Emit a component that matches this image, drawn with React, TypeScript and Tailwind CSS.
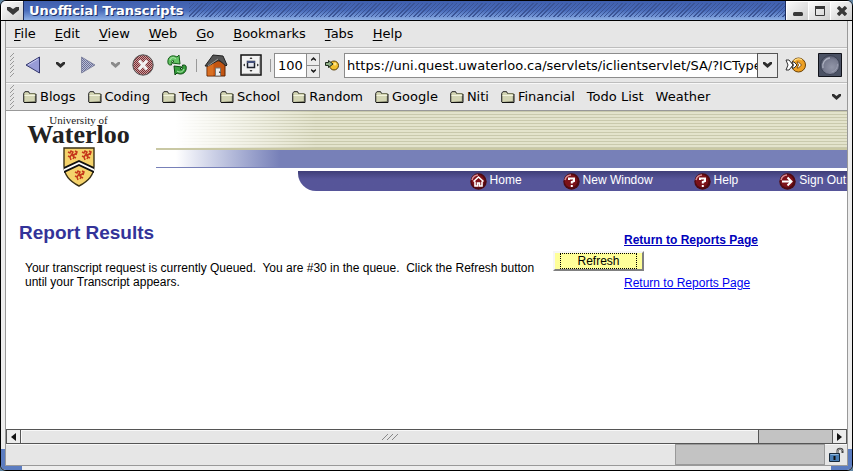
import type { ReactNode } from 'react'

const menus = ['File', 'Edit', 'View', 'Web', 'Go', 'Bookmarks', 'Tabs', 'Help']

const folders = ['Blogs', 'Coding', 'Tech', 'School', 'Random', 'Google', 'Niti', 'Financial']

const STRIPES =
  'bg-[repeating-linear-gradient(135deg,#3a5496_0px,#3a5496_1px,transparent_1px,transparent_3px)]'

function Chevron({ color = '#2e2e2e' }: { color?: string }) {
  return (
    <svg width="9" height="6" viewBox="0 0 9 6" fill={color}>
      <path d="M0 0h2l2.500 2L7 0h2v2L4.500 6 0 2z" />
    </svg>
  )
}

function Folder() {
  return (
    <svg width="14" height="12" viewBox="0 0 14 12">
      <path d="M1 11.500V2.500L2 .8h3.500l1 1.700h5.800v8z" fill="#d3d5b4" stroke="#77795f" />
      <path d="M1.500 4.500h11" stroke="#f3f4df" />
      <path d="M1 11.500h12V3" fill="none" stroke="#111" />
      <path d="M.5 11V2.500L2 .5h3.500l1 2" fill="none" stroke="#444" />
    </svg>
  )
}

function Grip() {
  return (
    <svg width="6" height="24" viewBox="0 0 6 24" stroke="#999">
      <path d="M1 4l4-4M1 8l4-4M1 12l4-4M1 16l4-4M1 20l4-4M1 24l4-4" />
    </svg>
  )
}

function BackIcon() {
  return (
    <svg width="16" height="18" viewBox="0 0 16 18">
      <path d="M1 9L14.500 1v16z" fill="#979bd6" stroke="#33376e" />
      <path d="M3 9L13 3" stroke="#c5c8ee" />
    </svg>
  )
}

function ForwardIcon() {
  return (
    <svg width="16" height="18" viewBox="0 0 16 18">
      <defs>
        <pattern id="dither" width="2" height="2" patternUnits="userSpaceOnUse">
          <path d="M0 0h1v1H0zM1 1h1v1H1z" fill="#6a6f96" />
        </pattern>
      </defs>
      <path d="M15 9L1.500 1v16z" fill="#b9bcd6" />
      <path d="M15 9L1.500 1v16z" fill="url(#dither)" stroke="#6f7291" strokeWidth=".7" />
    </svg>
  )
}

function StopIcon() {
  return (
    <svg width="22" height="22" viewBox="0 0 22 22">
      <defs>
        <pattern id="stop-dither" width="2" height="2" patternUnits="userSpaceOnUse">
          <path d="M0 0h1v1H0zM1 1h1v1H1z" fill="#7c2b30" />
        </pattern>
      </defs>
      <circle cx="11" cy="11" r="10.200" fill="#c9a3a3" />
      <circle cx="11" cy="11" r="10.200" fill="url(#stop-dither)" stroke="#555" />
      <path d="M7 6.500l8 9M15 6.500l-8 9" stroke="#f2f2f2" strokeWidth="3" />
    </svg>
  )
}

function ReloadIcon() {
  return (
    <svg width="22" height="22" viewBox="0 0 22 22" strokeLinejoin="round">
      <path
        d="M2 9C1 3 6 0 11 3l2-2 1 9-8-1 2-2C6 6 5 7 5.500 11 3.500 11 2.500 11 2 9z"
        fill="#65c465"
        stroke="#145c18"
      />
      <path
        d="M20 12c1.500 6-4 10-9 7l-2 2-1-9 8 1-2 2c2 1 3 0 2.500-4 2 0 3 0 3.500 1z"
        fill="#38a13e"
        stroke="#0b4810"
      />
      <path d="M4 6c1-3 4-3 6-1M11 17c3 2 6 1 7-2" fill="none" stroke="#b6eab2" />
    </svg>
  )
}

function HomeIcon() {
  return (
    <svg width="24" height="23" viewBox="0 0 24 23">
      <path d="M3 10v12h18V9L11 6z" fill="#c35512" stroke="#5a2505" />
      <path d="M3.500 10v11.500h6V7z" fill="#d96f22" />
      <path d="M1 12L9 1l10 1 4 9-1 1-7-6L4 12z" fill="#555" stroke="#222" />
      <path d="M4 12L14 5" stroke="#999" />
      <path d="M11.500 14h5v8h-5z" fill="#ececec" stroke="#777" />
      <path d="M15 18h1v1" stroke="#333" />
    </svg>
  )
}

function FullscreenIcon() {
  return (
    <svg width="22" height="22" viewBox="0 0 22 22">
      <path d="M1 1h20v20H1z" fill="#f2f2f2" stroke="#111" strokeWidth="1.500" />
      <path d="M2.500 19.500h17v-17" fill="none" stroke="#bbb" />
      <path d="M7.500 7.500h7v6h-7z" fill="#e4e6ee" stroke="#20242e" strokeWidth="1.500" />
      <path d="M7 8h8" stroke="#414e7a" strokeWidth="2" />
      <path d="M9.500 5L11 3l1.500 2zM9.500 16l1.500 2 1.500-2zM5 9.500L3 11l2 1.500zM17 9.500l2 1.500-2 1.500z" fill="#333" />
    </svg>
  )
}

function GoBall() {
  return (
    <svg width="14" height="12" viewBox="0 0 14 12">
      <circle cx="9" cy="6.500" r="4.500" fill="#f2bf2d" stroke="#5a3f08" />
      <circle cx="10" cy="5" r="1.500" fill="#ffe58a" />
      <path d="M.5 3.500h3v-2L8 5 3.500 8.500v-2h-3z" fill="#8fae86" stroke="#1d2b1b" />
    </svg>
  )
}

function FishIcon() {
  return (
    <svg width="22" height="16" viewBox="0 0 22 16">
      <circle cx="13.500" cy="8" r="7" fill="#eda024" stroke="#6b4206" />
      <path d="M9 4a6 6 0 0 1 8-1" stroke="#ffdc83" strokeWidth="1.500" fill="none" />
      <path d="M1 3h3l4 5-4 5H1l2-5z" fill="#fff" stroke="#333" />
      <path d="M7 5h2l3 3-3 3H7l1.500-3z" fill="#fff" stroke="#333" />
      <path d="M12 5h1.500l3 3-3 3H12l1.500-3z" fill="#fff" stroke="#7a4c0c" />
    </svg>
  )
}

function Throbber() {
  return (
    <svg width="24" height="24" viewBox="0 0 24 24">
      <defs>
        <radialGradient id="lens" cx=".6" cy=".62" r=".6">
          <stop offset="0" stopColor="#9296a8" />
          <stop offset=".7" stopColor="#787c90" />
          <stop offset="1" stopColor="#565b6e" />
        </radialGradient>
      </defs>
      <path d="M.5.5h23v23H.5z" fill="#4b5264" stroke="#11131a" />
      <circle cx="12" cy="12" r="9.500" fill="url(#lens)" stroke="#3c4254" />
      <path d="M5 15A8 8 0 0 1 12 5" fill="none" stroke="#a9adbd" strokeWidth="1.500" />
      <path d="M19.500 11a8 8 0 0 1-6 8" fill="none" stroke="#989cae" />
    </svg>
  )
}

function Padlock() {
  return (
    <svg width="15" height="15" viewBox="0 0 15 15">
      <path d="M8.500 7V4c0-3 5-3 5 0v2" fill="none" stroke="#444" strokeWidth="2" />
      <path d="M8.500 6V4c0-2.500 5-2.500 5 0" fill="none" stroke="#bbb" strokeWidth=".7" />
      <path d="M.5 6.500h10v8H.5z" fill="#4a7fb5" stroke="#16283a" />
      <path d="M1.500 7.500h8" stroke="#8fb8de" />
      <path d="M5.500 9v4" stroke="#111" strokeWidth="2" />
    </svg>
  )
}

function Lion({ x, y }: { x: number; y: number }) {
  return (
    <g transform={`translate(${x} ${y})`} fill="none" stroke="#c63a1c" strokeWidth="1.500">
      <path d="M1 2l2 1 1-2 2 1-1 2 2 1 2-2M5 4L3 7 1 6M5 5l2 2-1 2M3 7l1 3M7 7l2 1M8 1l2 1-1 3" />
    </g>
  )
}

function Shield() {
  return (
    <svg width="32" height="40" viewBox="0 0 32 40">
      <path d="M1 1h30v18c0 10-7 16-15 20C8 35 1 29 1 19z" fill="#f5d36c" stroke="#3c3216" strokeWidth="1.400" />
      <path d="M1 20L16 13l15 7v6L16 19 1 26z" fill="#111" />
      <path d="M1 22l15-7 15 7v2L16 17 1 24z" fill="#fff" />
      <Lion x={4} y={3} />
      <Lion x={18} y={3} />
      <Lion x={11} y={23} />
    </svg>
  )
}

function NavBall({ children }: { children: ReactNode }) {
  return (
    <svg width="17" height="17" viewBox="0 0 17 17">
      <circle cx="8.500" cy="8.500" r="8.200" fill="#4e0a12" />
      <circle cx="8" cy="8" r="6.500" fill="#7c1119" />
      <path d="M2 7a6.500 6.500 0 0 1 6-5" fill="none" stroke="#d98d94" strokeWidth="1.500" />
      {children}
    </svg>
  )
}

const question = (
  <path d="M6 7V5.500h5V8L8.800 9v1.500M8.800 12v2" fill="none" stroke="#fff" strokeWidth="2" />
)

const navLinks = [
  {
    label: 'Home',
    icon: (
      <path d="M3.500 8.500l5-4.500 5 4.500M5 8.500V13h2.500v-3h2v3H12V8.500" fill="none" stroke="#fff" strokeWidth="1.600" />
    ),
  },
  { label: 'New Window', icon: question },
  { label: 'Help', icon: question },
  {
    label: 'Sign Out',
    icon: <path d="M3 8.500h9M8.500 4.500l4 4-4 4" fill="none" stroke="#fff" strokeWidth="2" />,
  },
]

function TitleButton({ label, children }: { label: string; children: ReactNode }) {
  return (
    <button
      aria-label={label}
      className="flex h-[19px] w-[22px] items-center justify-center border-t border-l border-white bg-linear-to-br from-[#fafafa] to-[#cfcfcf]"
    >
      {children}
    </button>
  )
}

function TitleBar() {
  return (
    <header className="flex h-5 border-b border-black bg-linear-to-b from-[#3f5fae] via-[#4a6cba] to-[#8fb0e6]">
      <TitleButton label="Window menu">
        <svg width="12" height="8" viewBox="0 0 12 8">
          <path d="M0 0h3l3 2 3-2h3v3L6 8 0 3z" fill="#383838" />
        </svg>
      </TitleButton>
      <h1 className="border-l border-[#1c2c5c] px-[5px] text-[13px] leading-[19px] font-bold text-white [text-shadow:1px_1px_0_#1d3068]">
        Unofficial Transcripts
      </h1>
      <div className={`mt-0.5 h-[14px] flex-1 ${STRIPES}`} />
      <div className="flex border-l border-[#1c2c5c]">
        <TitleButton label="Minimize">
          <svg width="10" height="10" viewBox="0 0 10 10">
            <rect y="6" width="10" height="4" rx="1.500" fill="#383838" />
          </svg>
        </TitleButton>
        <TitleButton label="Maximize">
          <svg width="10" height="10" viewBox="0 0 10 10">
            <path d="M.5 1v8.500h9V1" fill="none" stroke="#383838" />
            <path d="M0 0h10v3H0z" fill="#383838" />
          </svg>
        </TitleButton>
        <TitleButton label="Close">
          <svg width="10" height="10" viewBox="0 0 10 10">
            <path d="M1 1l8 8M9 1L1 9" stroke="#383838" strokeWidth="3.400" />
          </svg>
        </TitleButton>
      </div>
    </header>
  )
}

function Toolbar() {
  return (
    <div className="flex h-[35px] items-center border-b border-[#bdbdbd] pr-[5px] pl-[3px] shadow-[inset_0_1px_0_#f8f8f8]">
      <Grip />
      <button aria-label="Back" className="ml-2.5">
        <BackIcon />
      </button>
      <button aria-label="Back history" className="ml-[15px]">
        <Chevron />
      </button>
      <button aria-label="Forward" className="ml-[15px]">
        <ForwardIcon />
      </button>
      <button aria-label="Forward history" className="ml-[15px]">
        <Chevron color="#8a8a8a" />
      </button>
      <button aria-label="Stop" className="ml-3">
        <StopIcon />
      </button>
      <button aria-label="Reload" className="ml-3">
        <ReloadIcon />
      </button>
      <div className="ml-2 h-[13px] w-px bg-[#999]" />
      <button aria-label="Home" className="ml-[7px]">
        <HomeIcon />
      </button>
      <button aria-label="Full screen" className="ml-3">
        <FullscreenIcon />
      </button>
      <div className="ml-2 h-[13px] w-px bg-[#999]" />
      <div className="ml-[3px] flex h-[25px] w-[46px] shrink-0 border border-[#8c8c8c] bg-white">
        <input aria-label="Zoom" defaultValue="100" className="w-[31px] pl-[3px] text-[13px] leading-[23px] outline-none" />
        <div className="flex flex-1 flex-col border-l border-[#8c8c8c] bg-[#ececec]">
          <button aria-label="Zoom in" className="flex flex-1 items-center justify-center border-b border-[#8c8c8c]">
            <svg width="5" height="4" viewBox="0 0 5 4">
              <path d="M0 4V2.500L2.500 0 5 2.500V4L2.500 2.500z" fill="#222" />
            </svg>
          </button>
          <button aria-label="Zoom out" className="flex flex-1 items-center justify-center">
            <svg width="5" height="4" viewBox="0 0 5 4">
              <path d="M0 0v1.500L2.500 4 5 1.500V0L2.500 1.500z" fill="#222" />
            </svg>
          </button>
        </div>
      </div>
      <button aria-label="Go" className="ml-[5px]">
        <GoBall />
      </button>
      <div className="ml-[5px] flex h-[25px] min-w-0 flex-1 border border-[#8c8c8c] bg-white">
        <input
          aria-label="Address"
          defaultValue="https://uni.quest.uwaterloo.ca/servlets/iclientservlet/SA/?ICType="
          className="min-w-0 flex-1 pl-0.5 text-[13px] leading-[23px] outline-none"
        />
        <button
          aria-label="Address history"
          className="-my-px -mr-px flex w-[21px] items-center justify-center border border-[#555] bg-[#ececec]"
        >
          <Chevron />
        </button>
      </div>
      <button aria-label="Open link" className="ml-[7px]">
        <FishIcon />
      </button>
      <div className="ml-[11px]">
        <Throbber />
      </div>
    </div>
  )
}

function SiteHeader() {
  return (
    <div className="flex">
      <div className="flex w-[150px] shrink-0 flex-col items-center pt-1 pr-[5px] font-['Liberation_Serif',serif] text-[#222]">
        <div className="text-[11px] leading-[11px]">University of</div>
        <div className="text-[26px] leading-[17px] font-bold">Waterloo</div>
        <div className="mt-1">
          <Shield />
        </div>
      </div>
      <div className="min-w-0 flex-1">
        <div className="h-[39px] border-b-2 border-[#c9c8a4] bg-[linear-gradient(90deg,#fff_0px,#fff_20px,transparent_160px),repeating-linear-gradient(180deg,#c9c9ad_0px,#c9c9ad_1px,#e3e3cc_1px,#e3e3cc_3px)]" />
        <div className="h-[18px] border-b border-[#7780b8] bg-linear-to-r from-white from-[20px] to-[#7780b8] to-[124px]" />
        <nav className="mt-[3px] ml-[142px] flex h-5 justify-end gap-[41px] overflow-hidden rounded-bl-[18px] bg-linear-to-b from-[#3f3e78] to-[#565599] to-40% pr-px">
          {navLinks.map((link) => (
            <a key={link.label} href="#" className="flex shrink-0 gap-[3px] text-[12px] leading-[18px] text-white">
              <span className="pt-0.5">
                <NavBall>{link.icon}</NavBall>
              </span>
              {link.label}
            </a>
          ))}
        </nav>
      </div>
    </div>
  )
}

function Report() {
  return (
    <main className="font-['Liberation_Sans',sans-serif] text-[12px] leading-[14px] text-black">
      <div className="flex h-[30px] pl-[13px]">
        <h2 className="w-[605px] text-[19px] leading-[24px] font-bold text-[#333399]">Report Results</h2>
        <a href="#" className="pt-3 font-bold text-[#0000bb] underline">
          Return to Reports Page
        </a>
      </div>
      <div className="flex pl-[19px]">
        <p className="w-[528px] pt-[10px] whitespace-pre">
          Your transcript request is currently Queued.{'  '}You are #30 in the queue.{'  '}Click the Refresh button
          {'\n'}until your Transcript appears.
        </p>
        <div>
          <button className="block h-5 w-[91px] border-2 border-t-[#f6f6f6] border-r-[#808080] border-b-[#808080] border-l-[#f6f6f6] bg-[#ffff99] px-[5px]">
            <span className="block border border-dotted border-black leading-[14px]">Refresh</span>
          </button>
          <a href="#" className="mt-[5px] ml-[71px] block text-[#0000ee] underline">
            Return to Reports Page
          </a>
        </div>
      </div>
    </main>
  )
}

function ScrollBar() {
  return (
    <div className="flex h-[15px] border-y border-[#555] bg-[#c3c3c3]">
      <button aria-label="Scroll left" className="flex w-[15px] items-center justify-center border-r border-l border-[#555] bg-[#ececec]">
        <svg width="5" height="8" viewBox="0 0 5 8">
          <path d="M5 0L0 4l5 4z" fill="#111" />
        </svg>
      </button>
      <div className="flex-1">
        <div className="flex h-full w-[91%] items-center justify-center border-r border-[#555] bg-[#e6e6e6] shadow-[inset_1px_1px_0_#f8f8f8]">
          <svg width="16" height="6" viewBox="0 0 16 6" stroke="#888">
            <path d="M0 6l6-6M5 6l6-6M10 6l6-6" />
          </svg>
        </div>
      </div>
      <button aria-label="Scroll right" className="flex w-[15px] items-center justify-center border-r border-l border-[#555] bg-[#ececec]">
        <svg width="5" height="8" viewBox="0 0 5 8">
          <path d="M0 0l5 4-5 4z" fill="#111" />
        </svg>
      </button>
    </div>
  )
}

export default function App() {
  return (
    <div className="bg-[#5f83a0]">
      <div className="relative flex min-h-screen flex-col overflow-hidden rounded-md border border-black bg-[#ededed] font-['DejaVu_Sans',sans-serif] text-[13px] text-black">
        <TitleBar />
        {/* blue frame corners */}
        <div className="absolute bottom-0 left-0 h-[21px] w-[21px] bg-[#5b7cc0]" />
        <div className="absolute right-0 bottom-0 h-[21px] w-[21px] bg-[#5b7cc0]" />
        <div className="relative mx-1 mb-1 flex flex-1 flex-col border-x border-b border-[#999] bg-[#e6e6e6]">
          <nav className="flex h-[27px] items-center gap-[19px] border-b border-[#bdbdbd] pl-2">
            {menus.map((m) => (
              <button key={m}>
                <span className="underline underline-offset-2">{m[0]}</span>
                {m.slice(1)}
              </button>
            ))}
          </nav>
          <Toolbar />
          <div className="flex h-[28px] items-center border-b border-[#999] pr-1.5 pl-[3px] shadow-[inset_0_1px_0_#f8f8f8]">
            <Grip />
            <div className="ml-2 flex flex-1 gap-3">
              {folders.map((f) => (
                <button key={f} className="flex items-center gap-[3px]">
                  <Folder />
                  {f}
                </button>
              ))}
              <a href="#">Todo List</a>
              <a href="#">Weather</a>
            </div>
            <button aria-label="More bookmarks">
              <Chevron />
            </button>
          </div>
          <div className="flex-1 bg-white font-['Liberation_Sans',sans-serif]">
            <SiteHeader />
            <div className="mt-[30px]">
              <Report />
            </div>
          </div>
          <ScrollBar />
          <footer className="flex h-[21px] justify-end shadow-[inset_0_1px_0_#f8f8f8]">
            <div className="w-[150px] border border-[#999] bg-[#c3c3c3]" />
            <div className="flex w-[22px] items-center justify-center">
              <Padlock />
            </div>
          </footer>
        </div>
      </div>
    </div>
  )
}
